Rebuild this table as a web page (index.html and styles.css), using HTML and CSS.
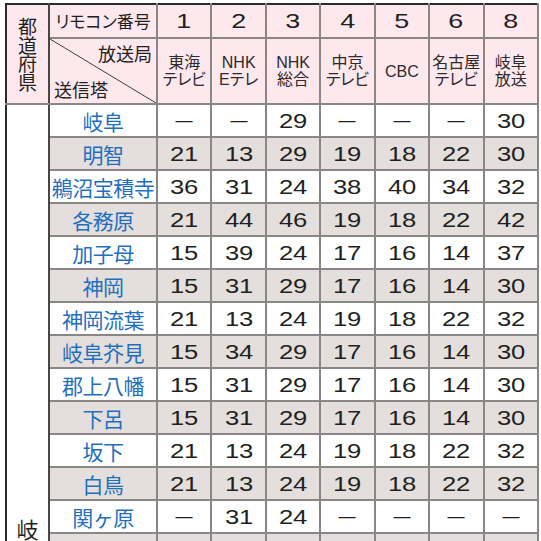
FILE: index.html
```html
<!DOCTYPE html>
<html lang="ja">
<head>
<meta charset="utf-8">
<link rel="stylesheet" href="styles.css">
</head>
<body>
<table class="tbl">
  <colgroup>
    <col class="c-pref"><col class="c-name">
    <col class="c-n"><col class="c-n"><col class="c-n"><col class="c-n"><col class="c-n"><col class="c-n"><col class="c-n">
  </colgroup>
  <thead>
    <tr class="h1">
      <th rowspan="2" class="pref">都<br>道<br>府<br>県</th>
      <th class="remo">リモコン番号</th>
      <th class="ch"><span class="num">1</span></th>
      <th class="ch"><span class="num">2</span></th>
      <th class="ch"><span class="num">3</span></th>
      <th class="ch"><span class="num">4</span></th>
      <th class="ch"><span class="num">5</span></th>
      <th class="ch"><span class="num">6</span></th>
      <th class="ch"><span class="num">8</span></th>
    </tr>
    <tr class="h2">
      <th class="diag"><div class="diag-in"><span class="bk">放送局</span><span class="tw">送信塔</span></div></th>
      <th class="st">東海<br>テレビ</th>
      <th class="st">NHK<br>Eテレ</th>
      <th class="st">NHK<br>総合</th>
      <th class="st">中京<br>テレビ</th>
      <th class="st">CBC</th>
      <th class="st">名古屋<br>テレビ</th>
      <th class="st">岐阜<br>放送</th>
    </tr>
  </thead>
  <tbody>
    <tr>
      <td rowspan="15" class="pref-body">岐</td>
      <td class="name">岐阜</td><td><span class="dash">—</span></td><td><span class="dash">—</span></td><td><span class="num">29</span></td><td><span class="dash">—</span></td><td><span class="dash">—</span></td><td><span class="dash">—</span></td><td><span class="num">30</span></td>
    </tr>
    <tr class="g">
      <td class="name">明智</td><td><span class="num">21</span></td><td><span class="num">13</span></td><td><span class="num">29</span></td><td><span class="num">19</span></td><td><span class="num">18</span></td><td><span class="num">22</span></td><td><span class="num">30</span></td>
    </tr>
    <tr>
      <td class="name">鵜沼宝積寺</td><td><span class="num">36</span></td><td><span class="num">31</span></td><td><span class="num">24</span></td><td><span class="num">38</span></td><td><span class="num">40</span></td><td><span class="num">34</span></td><td><span class="num">32</span></td>
    </tr>
    <tr class="g">
      <td class="name">各務原</td><td><span class="num">21</span></td><td><span class="num">44</span></td><td><span class="num">46</span></td><td><span class="num">19</span></td><td><span class="num">18</span></td><td><span class="num">22</span></td><td><span class="num">42</span></td>
    </tr>
    <tr>
      <td class="name">加子母</td><td><span class="num">15</span></td><td><span class="num">39</span></td><td><span class="num">24</span></td><td><span class="num">17</span></td><td><span class="num">16</span></td><td><span class="num">14</span></td><td><span class="num">37</span></td>
    </tr>
    <tr class="g">
      <td class="name">神岡</td><td><span class="num">15</span></td><td><span class="num">31</span></td><td><span class="num">29</span></td><td><span class="num">17</span></td><td><span class="num">16</span></td><td><span class="num">14</span></td><td><span class="num">30</span></td>
    </tr>
    <tr>
      <td class="name">神岡流葉</td><td><span class="num">21</span></td><td><span class="num">13</span></td><td><span class="num">24</span></td><td><span class="num">19</span></td><td><span class="num">18</span></td><td><span class="num">22</span></td><td><span class="num">32</span></td>
    </tr>
    <tr class="g">
      <td class="name">岐阜芥見</td><td><span class="num">15</span></td><td><span class="num">34</span></td><td><span class="num">29</span></td><td><span class="num">17</span></td><td><span class="num">16</span></td><td><span class="num">14</span></td><td><span class="num">30</span></td>
    </tr>
    <tr>
      <td class="name">郡上八幡</td><td><span class="num">15</span></td><td><span class="num">31</span></td><td><span class="num">29</span></td><td><span class="num">17</span></td><td><span class="num">16</span></td><td><span class="num">14</span></td><td><span class="num">30</span></td>
    </tr>
    <tr class="g">
      <td class="name">下呂</td><td><span class="num">15</span></td><td><span class="num">31</span></td><td><span class="num">29</span></td><td><span class="num">17</span></td><td><span class="num">16</span></td><td><span class="num">14</span></td><td><span class="num">30</span></td>
    </tr>
    <tr>
      <td class="name">坂下</td><td><span class="num">21</span></td><td><span class="num">13</span></td><td><span class="num">24</span></td><td><span class="num">19</span></td><td><span class="num">18</span></td><td><span class="num">22</span></td><td><span class="num">32</span></td>
    </tr>
    <tr class="g">
      <td class="name">白鳥</td><td><span class="num">21</span></td><td><span class="num">13</span></td><td><span class="num">24</span></td><td><span class="num">19</span></td><td><span class="num">18</span></td><td><span class="num">22</span></td><td><span class="num">32</span></td>
    </tr>
    <tr>
      <td class="name">関ヶ原</td><td><span class="dash">—</span></td><td><span class="num">31</span></td><td><span class="num">24</span></td><td><span class="dash">—</span></td><td><span class="dash">—</span></td><td><span class="dash">—</span></td><td><span class="dash">—</span></td>
    </tr>
    <tr class="g">
      <td class="name">高山</td><td><span class="num">21</span></td><td><span class="num">13</span></td><td><span class="num">24</span></td><td><span class="num">19</span></td><td><span class="num">18</span></td><td><span class="num">22</span></td><td><span class="num">32</span></td>
    </tr>
    <tr>
      <td class="name">美濃</td><td><span class="num">21</span></td><td><span class="num">13</span></td><td><span class="num">24</span></td><td><span class="num">19</span></td><td><span class="num">18</span></td><td><span class="num">22</span></td><td><span class="num">32</span></td>
    </tr>
  </tbody>
</table>
</body>
</html>
```

FILE: styles.css
```css
html, body {
  margin: 0;
  padding: 0;
  background: #ffffff;
}
body {
  padding: 3px 0 0 5px;
  font-family: "Liberation Sans", "Noto Sans CJK JP", sans-serif;
  color: #231f20;
  overflow: hidden;
  height: 538px;
}
.tbl {
  border-collapse: collapse;
  table-layout: fixed;
  width: 534px;
  border: 2px solid #2b2b2b;
}
.c-pref { width: 43px; }
.c-name { width: 108px; }
.c-n { width: 54.4px; }

.tbl th, .tbl td {
  border: 2px solid #8a8686;
  padding: 0;
  text-align: center;
  vertical-align: middle;
}
.tbl thead th {
  background: #fde8ee;
  font-weight: normal;
}
.h1 th { height: 32px; }
.h2 th { height: 64px; }
.tbl tbody td { height: 31px; }
.tbl tbody tr.g td { background: #e4dfdc; }
.tbl tbody tr.g td.pref-body { background: #ffffff; }

.tbl thead tr:first-child th { border-top: 2px solid #2b2b2b; }
.tbl .pref, .tbl .pref-body {
  border-left: 2px solid #2b2b2b;
  border-right: 2px solid #4a4646;
}
.pref {
  font-family: "Noto Sans CJK JP", sans-serif;
  font-size: 19px;
  line-height: 18.5px;
  padding-top: 2px;
}
.pref-body {
  background: #ffffff;
  vertical-align: top !important;
  font-family: "Noto Sans CJK JP", sans-serif;
  font-size: 22px;
  line-height: 26px;
  padding-top: 410px !important;
}
.remo {
  font-family: "Noto Sans CJK JP", sans-serif;
  font-size: 17px;
  font-feature-settings: "palt";
  line-height: 20px;
}
.num {
  display: inline-block;
  font-size: 20px;
  line-height: 22px;
  transform: scaleX(1.28);
}
.ch .num { font-size: 21px; }
.dash {
  display: inline-block;
  font-size: 20px;
  transform: scaleX(0.85);
}
.st {
  font-family: "Liberation Sans", "Noto Sans CJK JP", sans-serif;
  font-size: 16px;
  line-height: 17px;
  font-feature-settings: "palt";
  color: #2b2b2b;
}
.diag {
  background: #fde8ee linear-gradient(to top right, transparent calc(50% - 0.8px), #333 50%, transparent calc(50% + 0.8px)) !important;
}
.diag-in {
  display: flex;
  flex-direction: column;
  justify-content: space-between;
  height: 58px;
  padding: 2px 4px 2px 4px;
  font-family: "Noto Sans CJK JP", sans-serif;
  font-size: 18px;
  line-height: 22px;
}
.bk { align-self: flex-end; }
.tw { align-self: flex-start; }
.name {
  font-family: "Noto Sans CJK JP", sans-serif;
  font-size: 21px;
  color: #1f6fc0;
  white-space: nowrap;
  letter-spacing: -0.5px;
}
```
